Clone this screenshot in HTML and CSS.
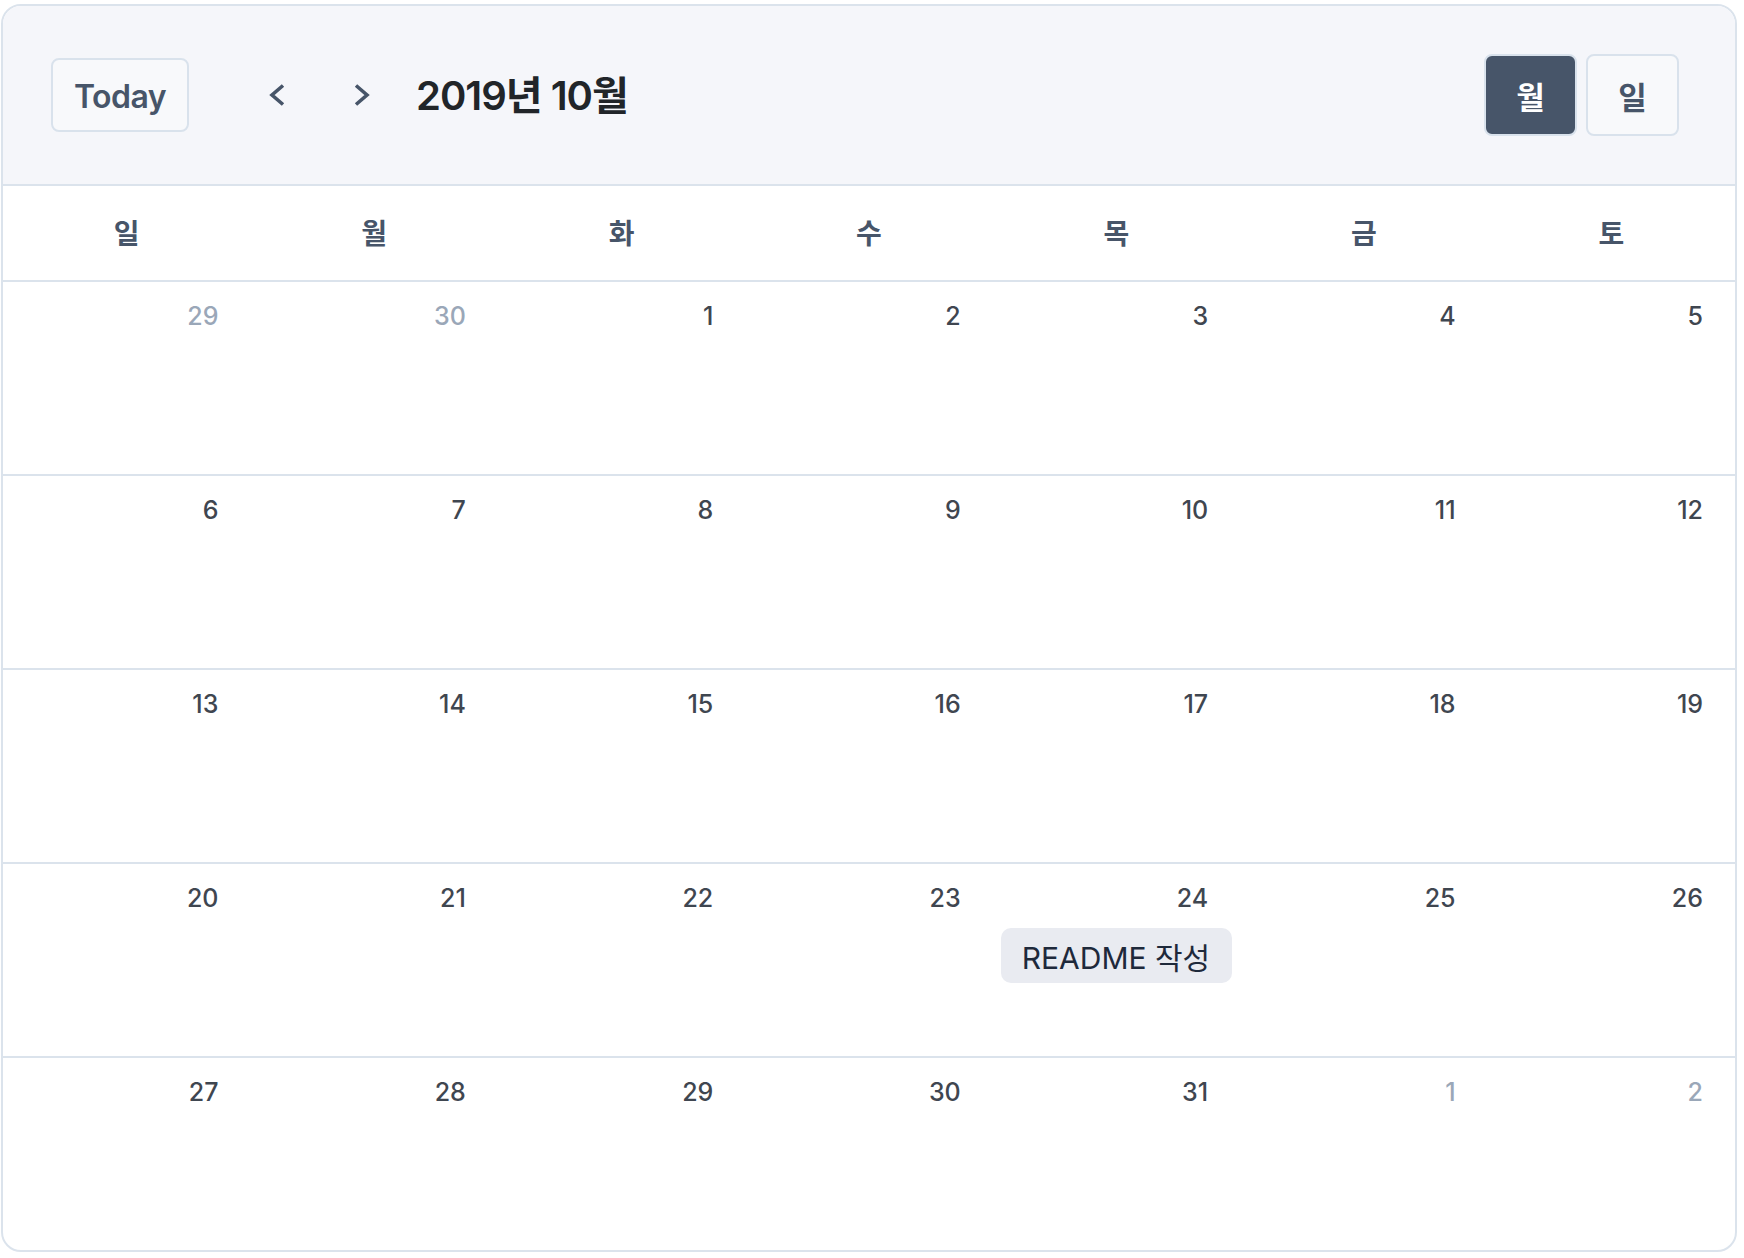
FILE: index.html
```html
<!DOCTYPE html>
<html lang="ko">
<head>
<meta charset="utf-8">
<title>Calendar</title>
<link rel="stylesheet" href="styles.css">
</head>
<body>
<div class="calendar">
  <header class="toolbar">
    <button class="btn btn-today">Today</button>
    <button class="nav-btn nav-prev" aria-label="이전">
      <svg width="18" height="24" viewBox="0 0 18 24"><path d="M15 2.5 L4 12 L15 21.5" fill="none" stroke="#475569" stroke-width="3.6"/></svg>
    </button>
    <button class="nav-btn nav-next" aria-label="다음">
      <svg width="18" height="24" viewBox="0 0 18 24"><path d="M3 2.5 L14 12 L3 21.5" fill="none" stroke="#475569" stroke-width="3.6"/></svg>
    </button>
    <h1 class="title">2019년 10월</h1>
    <div class="view-switch">
      <button class="btn btn-view active">월</button>
      <button class="btn btn-view">일</button>
    </div>
  </header>
  <div class="weekdays">
    <div class="wd">일</div><div class="wd">월</div><div class="wd">화</div><div class="wd">수</div><div class="wd">목</div><div class="wd">금</div><div class="wd">토</div>
  </div>
  <div class="week">
    <div class="day other"><span class="num">29</span></div>
    <div class="day other"><span class="num">30</span></div>
    <div class="day"><span class="num">1</span></div>
    <div class="day"><span class="num">2</span></div>
    <div class="day"><span class="num">3</span></div>
    <div class="day"><span class="num">4</span></div>
    <div class="day"><span class="num">5</span></div>
  </div>
  <div class="week">
    <div class="day"><span class="num">6</span></div>
    <div class="day"><span class="num">7</span></div>
    <div class="day"><span class="num">8</span></div>
    <div class="day"><span class="num">9</span></div>
    <div class="day"><span class="num">10</span></div>
    <div class="day"><span class="num">11</span></div>
    <div class="day"><span class="num">12</span></div>
  </div>
  <div class="week">
    <div class="day"><span class="num">13</span></div>
    <div class="day"><span class="num">14</span></div>
    <div class="day"><span class="num">15</span></div>
    <div class="day"><span class="num">16</span></div>
    <div class="day"><span class="num">17</span></div>
    <div class="day"><span class="num">18</span></div>
    <div class="day"><span class="num">19</span></div>
  </div>
  <div class="week">
    <div class="day"><span class="num">20</span></div>
    <div class="day"><span class="num">21</span></div>
    <div class="day"><span class="num">22</span></div>
    <div class="day"><span class="num">23</span></div>
    <div class="day"><span class="num">24</span><div class="event">README 작성</div></div>
    <div class="day"><span class="num">25</span></div>
    <div class="day"><span class="num">26</span></div>
  </div>
  <div class="week last">
    <div class="day"><span class="num">27</span></div>
    <div class="day"><span class="num">28</span></div>
    <div class="day"><span class="num">29</span></div>
    <div class="day"><span class="num">30</span></div>
    <div class="day"><span class="num">31</span></div>
    <div class="day other"><span class="num">1</span></div>
    <div class="day other"><span class="num">2</span></div>
  </div>
</div>
</body>
</html>
```

FILE: styles.css
```css
* { box-sizing: border-box; }

html, body {
  margin: 0;
  padding: 0;
  background: #ffffff;
}

body {
  font-family: "Inter", "Noto Sans CJK KR", sans-serif;
  padding: 4px 0 0 1px;
}

.calendar {
  width: 1736px;
  border: 2px solid #dbe3ec;
  border-radius: 20px;
  overflow: hidden;
  background: #ffffff;
}

.toolbar {
  height: 180px;
  display: flex;
  align-items: center;
  padding: 0 56px 0 48px;
  background: #f5f6fa;
  border-bottom: 2px solid #dbe3ec;
}

button {
  font-family: inherit;
  cursor: pointer;
}

.btn {
  border: 2px solid #d9e2ec;
  border-radius: 8px;
  background: #f8f9fb;
  color: #475569;
  font-weight: 600;
  padding: 0;
  display: flex;
  align-items: center;
  justify-content: center;
}

.btn-today {
  width: 138px;
  height: 74px;
  font-size: 32px;
  letter-spacing: -0.5px;
  padding-top: 2px;
}

.nav-btn {
  width: 44px;
  height: 44px;
  border: none;
  background: transparent;
  padding: 0;
  display: flex;
  align-items: center;
  justify-content: center;
}

.nav-prev { margin-left: 66px; }
.nav-next { margin-left: 41px; }

.title {
  margin: 0 0 0 32px;
  font-size: 40px;
  font-weight: 600;
  color: #212529;
  letter-spacing: -1px;
  line-height: 1;
  padding-top: 2px;
}

.view-switch {
  margin-left: auto;
  display: flex;
  gap: 9px;
}

.btn-view {
  width: 93px;
  height: 82px;
  font-size: 31px;
}

.btn-view.active {
  background: #475569;
  color: #ffffff;
}

.weekdays {
  height: 96px;
  display: grid;
  grid-template-columns: repeat(7, 1fr);
  border-bottom: 2px solid #dbe3ec;
}

.wd {
  display: flex;
  align-items: center;
  justify-content: center;
  font-size: 28px;
  font-weight: 600;
  color: #475569;
  padding-bottom: 2px;
}

.week {
  height: 194px;
  display: grid;
  grid-template-columns: repeat(7, 1fr);
  border-bottom: 2px solid #dbe3ec;
}

.week.last {
  height: 192px;
  border-bottom: none;
}

.day {
  display: flex;
  flex-direction: column;
  align-items: stretch;
  padding-top: 20px;
}

.num {
  display: block;
  text-align: right;
  padding-right: 32px;
  font-size: 25px;
  line-height: 29px;
  font-weight: 500;
  color: #3f4650;
}

.day.other .num {
  color: #9aa7b8;
}

.event {
  margin: 15px 8px 0 8px;
  height: 55px;
  border-radius: 10px;
  background: #e9ebf1;
  color: #1e293b;
  font-size: 30px;
  line-height: 55px;
  padding: 3px 0 0 21px;
  white-space: nowrap;
}
```
